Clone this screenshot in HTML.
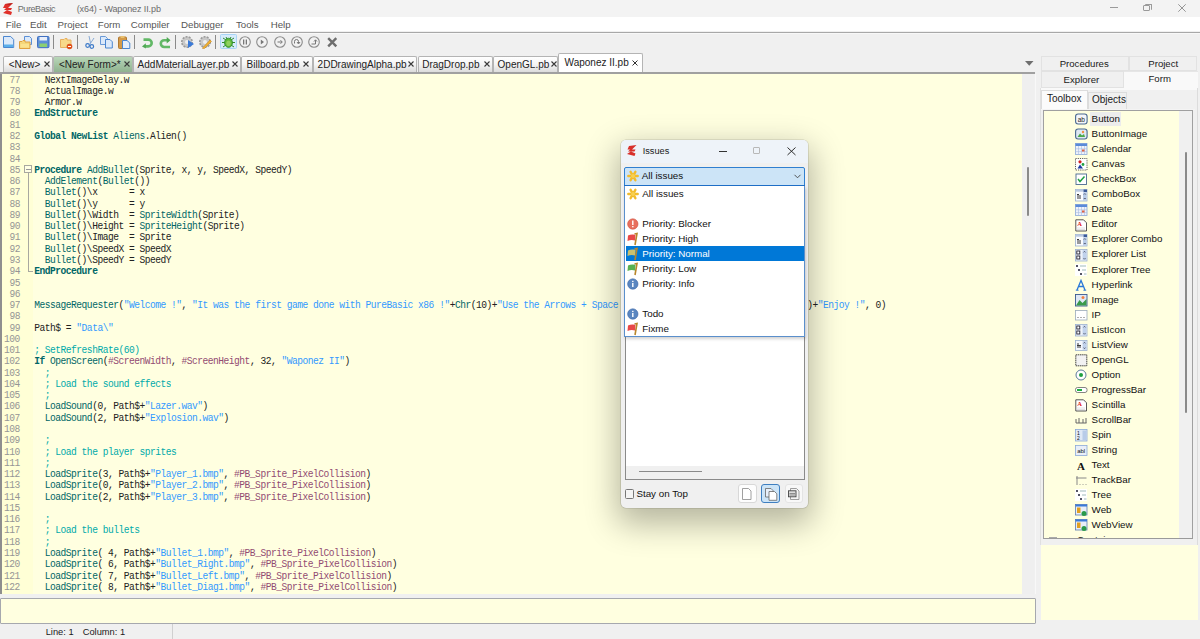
<!DOCTYPE html><html><head><meta charset="utf-8"><style>
*{margin:0;padding:0;box-sizing:border-box}
html,body{width:1200px;height:639px;overflow:hidden;background:#f0f0f0;position:relative;font-family:"Liberation Sans",sans-serif;}
.a{position:absolute;overflow:visible}
.t{position:absolute;white-space:pre;line-height:1}
.code{position:absolute;white-space:pre;font-family:"Liberation Mono",monospace;font-size:9.6px;letter-spacing:-0.50px;line-height:9.6px;left:34.3px;transform-origin:0 7.36px;transform:scaleY(1.07)}
.ln{position:absolute;white-space:pre;font-family:"Liberation Mono",monospace;font-size:9.6px;letter-spacing:-0.50px;line-height:9.6px;color:#959595;text-align:right;width:19.9px;left:0;transform-origin:0 7.36px;transform:scaleY(1.1)}
b{font-weight:bold}
</style></head><body>

<div class="a" style="left:0.00px;top:0.00px;width:1200.00px;height:16.80px;background:#f3f3f3;"></div>
<svg class="a" style="left:2.50px;top:2.50px" width="10" height="12" viewBox="0 0 10 12"><path d="M2 1 L10 0 L5 5 L9 5 L8 7 L4 7 L9 9 L8 12 L0 10 L4 7 L1 7 L3 5 L0 5 Z" fill="#e0302a"/><path d="M2 1 L10 0 L7 2 Z" fill="#b0201a"/></svg>
<div class="t" style="left:17.70px;top:4.58px;font-size:9px;color:#6c6c6c;font-weight:normal;letter-spacing:-0.4px">PureBasic</div>
<div class="t" style="left:76.70px;top:4.58px;font-size:9px;color:#6c6c6c;font-weight:normal;letter-spacing:-0.1px">(x64) - Waponez II.pb</div>
<div class="a" style="left:1110.00px;top:7.30px;width:7.50px;height:0.90px;background:#9a9a9a;"></div>
<div class="a" style="left:1143.3px;top:4.8px;width:7px;height:6.5px;border:0.8px solid #9a9a9a;border-radius:1px"></div>
<div class="a" style="left:1145px;top:4px;width:6.5px;height:6px;border-top:0.8px solid #9a9a9a;border-right:0.8px solid #9a9a9a;border-radius:1px"></div>
<svg class="a" style="left:1178.00px;top:3.50px" width="8" height="8" viewBox="0 0 8 8"><path d="M0.3 0.3 L7.7 7.7 M7.7 0.3 L0.3 7.7" stroke="#8a8a8a" stroke-width="0.9"/></svg>
<div class="a" style="left:0.00px;top:16.80px;width:1200.00px;height:14.70px;background:#ffffff;"></div>
<div class="a" style="left:0.00px;top:31.50px;width:1200.00px;height:1.50px;background:#a8a8a8;"></div>
<div class="a" style="left:0.00px;top:33.00px;width:1200.00px;height:1.00px;background:#f8f8f8;"></div>
<div class="t" style="left:5.80px;top:19.99px;font-size:9.7px;color:#555;font-weight:normal;">File</div>
<div class="t" style="left:30.00px;top:19.99px;font-size:9.7px;color:#555;font-weight:normal;">Edit</div>
<div class="t" style="left:57.50px;top:19.99px;font-size:9.7px;color:#555;font-weight:normal;">Project</div>
<div class="t" style="left:97.80px;top:19.99px;font-size:9.7px;color:#555;font-weight:normal;">Form</div>
<div class="t" style="left:130.80px;top:19.99px;font-size:9.7px;color:#555;font-weight:normal;">Compiler</div>
<div class="t" style="left:181.00px;top:19.99px;font-size:9.7px;color:#555;font-weight:normal;">Debugger</div>
<div class="t" style="left:236.00px;top:19.99px;font-size:9.7px;color:#555;font-weight:normal;">Tools</div>
<div class="t" style="left:270.70px;top:19.99px;font-size:9.7px;color:#555;font-weight:normal;">Help</div>
<svg class="a" style="left:2.80px;top:35.90px" width="12" height="12.5" viewBox="0 0 12 12.5"><path d="M0.5 0.5 H7.699999999999999 L10.7 3.5 V11.5 H0.5 Z" fill="#dbe9fa" stroke="#4a86d0" stroke-width="1"/><rect x="1" y="8.5" width="9.2" height="2.5" fill="#5aaeea"/></svg>
<svg class="a" style="left:18.50px;top:35.50px" width="14" height="13" viewBox="0 0 14 13"><path d="M5.5 0.5 H10.5 L12.5 2.5 V8.5 H5.5 Z" fill="#dbe9fa" stroke="#5a8fd6"/><path d="M0.5 5.5 H3 L4 4.5 H6 V6 H11 V12.5 H0.5 Z" fill="#f5d77a" stroke="#e0a040"/><rect x="1.5" y="8" width="8.5" height="3.5" fill="#fbe28e"/></svg>
<svg class="a" style="left:36.70px;top:36.00px" width="12.5" height="12.2" viewBox="0 0 12.5 12.2"><rect x="0.5" y="0.5" width="11.5" height="11.2" rx="1" fill="#5d8fd8" stroke="#3f6fc0"/><rect x="2.5" y="1" width="7.5" height="3.5" fill="#e8eefa"/><rect x="2.5" y="7.5" width="7.5" height="3.5" fill="#8ccf72"/></svg>
<div class="a" style="left:53.00px;top:34.80px;width:1.00px;height:14.10px;background:#8a8a8a;"></div>
<svg class="a" style="left:60.00px;top:37.50px" width="12.5" height="11.5" viewBox="0 0 12.5 11.5"><path d="M0.5 1.5 H4 L5 0.5 H7 V2 H11 V9.5 H0.5 Z" fill="#f7d98a" stroke="#e8b060"/><circle cx="9.5" cy="8.5" r="2.8" fill="#e0501a"/><rect x="8" y="8" width="3" height="1" fill="#fff"/></svg>
<div class="a" style="left:76.50px;top:34.80px;width:1.00px;height:14.10px;background:#8a8a8a;"></div>
<svg class="a" style="left:84.50px;top:35.50px" width="10" height="13" viewBox="0 0 10 13"><path d="M4 0 L5.5 7 M9 2 L5 8" stroke="#7aa0d0" stroke-width="0.9" fill="none"/><circle cx="2.6" cy="9.5" r="1.8" fill="none" stroke="#3a78c8" stroke-width="1.2"/><circle cx="6.8" cy="10.5" r="1.8" fill="none" stroke="#3a78c8" stroke-width="1.2"/></svg>
<svg class="a" style="left:100.00px;top:36.00px" width="13" height="12.5" viewBox="0 0 13 12.5"><path d="M0.5 0.5 H5.5 L7.5 2.5 V8.5 H0.5 Z" fill="#dbe9fa" stroke="#6a9ad8"/><path d="M5.5 3.5 H10 L12.3 5.8 V12 H5.5 Z" fill="#dbe9fa" stroke="#4a86d0"/></svg>
<svg class="a" style="left:117.50px;top:35.50px" width="12.5" height="13" viewBox="0 0 12.5 13"><rect x="0.5" y="1" width="8" height="11.5" rx="1" fill="#d49a48" stroke="#b07830"/><rect x="2.5" y="0" width="4" height="2" fill="#e8c070"/><path d="M4.5 4.5 H9 L11.8 7 V12.5 H4.5 Z" fill="#e4eefb" stroke="#4a86d0"/></svg>
<div class="a" style="left:134.00px;top:34.80px;width:1.00px;height:14.10px;background:#8a8a8a;"></div>
<svg class="a" style="left:141.50px;top:36.50px" width="11.5" height="11.5" viewBox="0 0 11.5 11.5"><path d="M1.5 2.6 H6.3 A3.4 3.4 0 0 1 6.3 9.4 H3" fill="none" stroke="#62b866" stroke-width="2.6"/><path d="M0 9.4 L3.8 6.2 L3.8 11.5 Z" fill="#4fa854"/></svg>
<svg class="a" style="left:158.50px;top:36.50px" width="11.5" height="11.5" viewBox="0 0 11.5 11.5"><path d="M10 3.2 H5.2 A3.4 3.4 0 0 0 5.2 10 H11" fill="none" stroke="#62b866" stroke-width="2.6"/><path d="M11.5 3.2 L7.7 0 L7.7 6.4 Z" fill="#4fa854"/></svg>
<div class="a" style="left:174.60px;top:34.80px;width:1.00px;height:14.10px;background:#8a8a8a;"></div>
<svg class="a" style="left:181.20px;top:36.00px" width="13.5" height="12.5" viewBox="0 0 13.5 12.5"><circle cx="6" cy="6" r="5.2" fill="#c8c8c8" stroke="#9a9a9a" stroke-dasharray="2 1.2" stroke-width="1.6"/><circle cx="6" cy="6" r="2" fill="#eee"/><path d="M7 4 L13 8 L7 12 Z" fill="#3a7ad8"/></svg>
<svg class="a" style="left:199.00px;top:36.00px" width="12.5" height="12.5" viewBox="0 0 12.5 12.5"><circle cx="6" cy="6" r="5.2" fill="#c8c8c8" stroke="#9a9a9a" stroke-dasharray="2 1.2" stroke-width="1.6"/><circle cx="6" cy="6" r="2" fill="#eee"/><path d="M4 11.5 L11 4 L12.5 5.5 L5.5 12.5 L3.5 12.5 Z" fill="#f0b030" stroke="#c08020" stroke-width="0.5"/></svg>
<div class="a" style="left:215.00px;top:34.80px;width:1.00px;height:14.10px;background:#8a8a8a;"></div>
<div class="a" style="left:220.4px;top:34px;width:16.3px;height:15.4px;background:#d6ebfb;border:0.8px solid #a8d4f6;border-radius:1.5px"></div>
<svg class="a" style="left:222.00px;top:35.50px" width="13" height="12.5" viewBox="0 0 13 12.5"><g stroke="#2f8a2f" stroke-width="1"><path d="M1 2 L4 4 M12 2 L9 4 M0 6.5 H3 M13 6.5 H10 M1 11 L4 9 M12 11 L9 9 M4 1 L5 3 M9 1 L8 3"/></g><ellipse cx="6.5" cy="6.8" rx="4" ry="4.6" fill="#5cb83a" stroke="#2f8a2f" stroke-width="0.8"/><ellipse cx="6.5" cy="7.2" rx="2.2" ry="2.8" fill="#8fd060"/></svg>
<svg class="a" style="left:239.30px;top:36.20px" width="12" height="12" viewBox="0 0 12 12"><circle cx="6" cy="6" r="5.3" fill="#f2f2f2" stroke="#8c8c8c" stroke-width="1.1"/><rect x="4" y="3.5" width="1.3" height="5" fill="#777"/><rect x="6.7" y="3.5" width="1.3" height="5" fill="#777"/></svg>
<svg class="a" style="left:256.30px;top:36.20px" width="12" height="12" viewBox="0 0 12 12"><circle cx="6" cy="6" r="5.3" fill="#f2f2f2" stroke="#8c8c8c" stroke-width="1.1"/><path d="M4.8 3.5 L8 6 L4.8 8.5 Z" fill="#777"/></svg>
<svg class="a" style="left:273.60px;top:36.20px" width="12" height="12" viewBox="0 0 12 12"><circle cx="6" cy="6" r="5.3" fill="#f2f2f2" stroke="#8c8c8c" stroke-width="1.1"/><path d="M3.5 6 H8 M6.5 4.2 L8.3 6 L6.5 7.8" stroke="#777" stroke-width="1" fill="none"/></svg>
<svg class="a" style="left:291.00px;top:36.20px" width="12" height="12" viewBox="0 0 12 12"><circle cx="6" cy="6" r="5.3" fill="#f2f2f2" stroke="#8c8c8c" stroke-width="1.1"/><path d="M3.5 7.5 V5.5 A2 2 0 0 1 7.5 5.5 V7 M6 6 L7.5 8 L9 6" stroke="#777" stroke-width="1" fill="none"/></svg>
<svg class="a" style="left:308.00px;top:36.20px" width="12" height="12" viewBox="0 0 12 12"><circle cx="6" cy="6" r="5.3" fill="#f2f2f2" stroke="#8c8c8c" stroke-width="1.1"/><path d="M3.5 8 H7.5 V4 M6 5.5 L7.5 3.8 L9 5.5" stroke="#777" stroke-width="1" fill="none"/></svg>
<svg class="a" style="left:326.50px;top:36.80px" width="10.5" height="10.5" viewBox="0 0 10.5 10.5"><path d="M1.2 1.2 L9.3 9.3 M9.3 1.2 L1.2 9.3" stroke="#6e6e6e" stroke-width="2.4"/></svg>
<div class="a" style="left:3.00px;top:56.2px;width:49.90px;height:16.3px;background:linear-gradient(#ffffff 0%,#f4f4f4 50%,#dcdcdc 100%);border:0.8px solid #b4b4b4;border-bottom:none;border-radius:2px 2px 0 0"></div>
<div class="t" style="left:8.70px;top:59.73px;font-size:10px;color:#222;font-weight:normal;">&lt;New&gt;</div>
<div class="a" style="left:52.90px;top:56.2px;width:80.10px;height:16.3px;background:linear-gradient(#b9d7b9,#8fb28f);border:0.8px solid #b4b4b4;border-bottom:none;border-radius:2px 2px 0 0"></div>
<div class="t" style="left:59.00px;top:59.73px;font-size:10px;color:#222;font-weight:normal;">&lt;New Form&gt;*</div>
<div class="a" style="left:133.00px;top:56.2px;width:108.30px;height:16.3px;background:linear-gradient(#ffffff 0%,#f4f4f4 50%,#dcdcdc 100%);border:0.8px solid #b4b4b4;border-bottom:none;border-radius:2px 2px 0 0"></div>
<div class="t" style="left:137.60px;top:59.73px;font-size:10px;color:#222;font-weight:normal;">AddMaterialLayer.pb</div>
<div class="a" style="left:241.30px;top:56.2px;width:72.00px;height:16.3px;background:linear-gradient(#ffffff 0%,#f4f4f4 50%,#dcdcdc 100%);border:0.8px solid #b4b4b4;border-bottom:none;border-radius:2px 2px 0 0"></div>
<div class="t" style="left:246.60px;top:59.73px;font-size:10px;color:#222;font-weight:normal;">Billboard.pb</div>
<div class="a" style="left:313.30px;top:56.2px;width:104.20px;height:16.3px;background:linear-gradient(#ffffff 0%,#f4f4f4 50%,#dcdcdc 100%);border:0.8px solid #b4b4b4;border-bottom:none;border-radius:2px 2px 0 0"></div>
<div class="t" style="left:317.60px;top:59.73px;font-size:10px;color:#222;font-weight:normal;">2DDrawingAlpha.pb</div>
<div class="a" style="left:417.50px;top:56.2px;width:75.80px;height:16.3px;background:linear-gradient(#ffffff 0%,#f4f4f4 50%,#dcdcdc 100%);border:0.8px solid #b4b4b4;border-bottom:none;border-radius:2px 2px 0 0"></div>
<div class="t" style="left:422.20px;top:59.73px;font-size:10px;color:#222;font-weight:normal;">DragDrop.pb</div>
<div class="a" style="left:493.30px;top:56.2px;width:65.00px;height:16.3px;background:linear-gradient(#ffffff 0%,#f4f4f4 50%,#dcdcdc 100%);border:0.8px solid #b4b4b4;border-bottom:none;border-radius:2px 2px 0 0"></div>
<div class="t" style="left:497.60px;top:59.73px;font-size:10px;color:#222;font-weight:normal;">OpenGL.pb</div>
<svg class="a" style="left:43.60px;top:60.90px" width="6" height="6" viewBox="0 0 6 6"><path d="M0.5 0.5 L5.5 5.5 M5.5 0.5 L0.5 5.5" stroke="#3a3a3a" stroke-width="1.1"/></svg>
<svg class="a" style="left:123.60px;top:60.90px" width="6" height="6" viewBox="0 0 6 6"><path d="M0.5 0.5 L5.5 5.5 M5.5 0.5 L0.5 5.5" stroke="#3a3a3a" stroke-width="1.1"/></svg>
<svg class="a" style="left:232.30px;top:60.90px" width="6" height="6" viewBox="0 0 6 6"><path d="M0.5 0.5 L5.5 5.5 M5.5 0.5 L0.5 5.5" stroke="#3a3a3a" stroke-width="1.1"/></svg>
<svg class="a" style="left:303.10px;top:60.90px" width="6" height="6" viewBox="0 0 6 6"><path d="M0.5 0.5 L5.5 5.5 M5.5 0.5 L0.5 5.5" stroke="#3a3a3a" stroke-width="1.1"/></svg>
<svg class="a" style="left:408.10px;top:60.90px" width="6" height="6" viewBox="0 0 6 6"><path d="M0.5 0.5 L5.5 5.5 M5.5 0.5 L0.5 5.5" stroke="#3a3a3a" stroke-width="1.1"/></svg>
<svg class="a" style="left:484.00px;top:60.90px" width="6" height="6" viewBox="0 0 6 6"><path d="M0.5 0.5 L5.5 5.5 M5.5 0.5 L0.5 5.5" stroke="#3a3a3a" stroke-width="1.1"/></svg>
<svg class="a" style="left:550.60px;top:60.90px" width="6" height="6" viewBox="0 0 6 6"><path d="M0.5 0.5 L5.5 5.5 M5.5 0.5 L0.5 5.5" stroke="#3a3a3a" stroke-width="1.1"/></svg>
<div class="a" style="left:558.3px;top:53.3px;width:85px;height:19.4px;background:#fff;border:0.8px solid #b4b4b4;border-bottom:none;border-radius:2px 2px 0 0"></div>
<div class="t" style="left:564.60px;top:58.13px;font-size:10px;color:#222;font-weight:normal;">Waponez II.pb</div>
<svg class="a" style="left:632.30px;top:60.00px" width="6" height="6" viewBox="0 0 6 6"><path d="M0.5 0.5 L5.5 5.5 M5.5 0.5 L0.5 5.5" stroke="#333" stroke-width="1"/></svg>
<svg class="a" style="left:1024.70px;top:61.20px" width="8.5" height="5" viewBox="0 0 8.5 5"><path d="M0 0 H8.5 L4.25 4.8 Z" fill="#6e6e6e"/></svg>
<div class="a" style="left:0.00px;top:72.30px;width:1034.50px;height:1.30px;background:#a0a0a0;"></div>
<div class="a" style="left:0.00px;top:73.50px;width:1022.00px;height:520.50px;background:#ffffe0;"></div>
<div class="a" style="left:0.00px;top:73.50px;width:1.80px;height:520.50px;background:#8e8e8e;"></div>
<div class="a" style="left:1.80px;top:73.50px;width:31.20px;height:520.50px;background:#ffffd6;"></div>
<div class="a" style="left:1022.00px;top:73.50px;width:12.40px;height:520.50px;background:#efefef;"></div>
<div class="a" style="left:1027.00px;top:167.30px;width:2.20px;height:48.80px;background:#8a8a8a;border-radius:1px"></div>
<div class="ln" style="top:75.64px">77</div>
<div class="code" style="top:75.64px"><span style="color:#222222">  NextImageDelay.w</span></div>
<div class="ln" style="top:86.91px">78</div>
<div class="code" style="top:86.91px"><span style="color:#222222">  ActualImage.w</span></div>
<div class="ln" style="top:98.18px">79</div>
<div class="code" style="top:98.18px"><span style="color:#222222">  Armor.w</span></div>
<div class="ln" style="top:109.45px">80</div>
<div class="code" style="top:109.45px"><b style="color:#006666">EndStructure</b></div>
<div class="ln" style="top:120.72px">81</div>
<div class="ln" style="top:131.99px">82</div>
<div class="code" style="top:131.99px"><b style="color:#006666">Global</b><span style="color:#222222"> </span><b style="color:#006666">NewList</b><span style="color:#222222"> </span><span style="color:#006666">Aliens</span><span style="color:#222222">.Alien()</span></div>
<div class="ln" style="top:143.26px">83</div>
<div class="ln" style="top:154.53px">84</div>
<div class="ln" style="top:165.80px">85</div>
<div class="code" style="top:165.80px"><b style="color:#006666">Procedure</b><span style="color:#222222"> </span><span style="color:#006666">AddBullet</span><span style="color:#222222">(Sprite, x, y, SpeedX, SpeedY)</span></div>
<div class="ln" style="top:177.07px">86</div>
<div class="code" style="top:177.07px"><span style="color:#222222">  </span><span style="color:#006666">AddElement</span><span style="color:#222222">(</span><span style="color:#006666">Bullet</span><span style="color:#222222">())</span></div>
<div class="ln" style="top:188.34px">87</div>
<div class="code" style="top:188.34px"><span style="color:#222222">  </span><span style="color:#006666">Bullet</span><span style="color:#222222">()\x      = x</span></div>
<div class="ln" style="top:199.61px">88</div>
<div class="code" style="top:199.61px"><span style="color:#222222">  </span><span style="color:#006666">Bullet</span><span style="color:#222222">()\y      = y</span></div>
<div class="ln" style="top:210.88px">89</div>
<div class="code" style="top:210.88px"><span style="color:#222222">  </span><span style="color:#006666">Bullet</span><span style="color:#222222">()\Width  = </span><span style="color:#006666">SpriteWidth</span><span style="color:#222222">(Sprite)</span></div>
<div class="ln" style="top:222.15px">90</div>
<div class="code" style="top:222.15px"><span style="color:#222222">  </span><span style="color:#006666">Bullet</span><span style="color:#222222">()\Height = </span><span style="color:#006666">SpriteHeight</span><span style="color:#222222">(Sprite)</span></div>
<div class="ln" style="top:233.42px">91</div>
<div class="code" style="top:233.42px"><span style="color:#222222">  </span><span style="color:#006666">Bullet</span><span style="color:#222222">()\Image  = Sprite</span></div>
<div class="ln" style="top:244.69px">92</div>
<div class="code" style="top:244.69px"><span style="color:#222222">  </span><span style="color:#006666">Bullet</span><span style="color:#222222">()\SpeedX = SpeedX</span></div>
<div class="ln" style="top:255.96px">93</div>
<div class="code" style="top:255.96px"><span style="color:#222222">  </span><span style="color:#006666">Bullet</span><span style="color:#222222">()\SpeedY = SpeedY</span></div>
<div class="ln" style="top:267.23px">94</div>
<div class="code" style="top:267.23px"><b style="color:#006666">EndProcedure</b></div>
<div class="ln" style="top:278.50px">95</div>
<div class="ln" style="top:289.77px">96</div>
<div class="ln" style="top:301.04px">97</div>
<div class="code" style="top:301.04px"><span style="color:#006666">MessageRequester</span><span style="color:#222222">(</span><span style="color:#3399FF">&quot;Welcome !&quot;</span><span style="color:#222222">, </span><span style="color:#3399FF">&quot;It was the first game done with PureBasic x86 !&quot;</span><span style="color:#222222">+</span><span style="color:#006666">Chr</span><span style="color:#222222">(10)+</span><span style="color:#3399FF">&quot;Use the Arrows + Space to move and shoot !&quot;+Chr(10)+Chr(10</span><span style="color:#222222">)+</span><span style="color:#3399FF">&quot;Enjoy !&quot;</span><span style="color:#222222">, 0)</span></div>
<div class="ln" style="top:312.31px">98</div>
<div class="ln" style="top:323.58px">99</div>
<div class="code" style="top:323.58px"><span style="color:#222222">Path$ = </span><span style="color:#3399FF">&quot;Data\&quot;</span></div>
<div class="ln" style="top:334.85px">100</div>
<div class="ln" style="top:346.12px">101</div>
<div class="code" style="top:346.12px"><span style="color:#00AAAA">; SetRefreshRate(60)</span></div>
<div class="ln" style="top:357.39px">102</div>
<div class="code" style="top:357.39px"><b style="color:#006666">If</b><span style="color:#222222"> </span><span style="color:#006666">OpenScreen</span><span style="color:#222222">(</span><span style="color:#924B72">#ScreenWidth</span><span style="color:#222222">, </span><span style="color:#924B72">#ScreenHeight</span><span style="color:#222222">, 32, </span><span style="color:#3399FF">&quot;Waponez II&quot;</span><span style="color:#222222">)</span></div>
<div class="ln" style="top:368.66px">103</div>
<div class="code" style="top:368.66px"><span style="color:#00AAAA">  ;</span></div>
<div class="ln" style="top:379.93px">104</div>
<div class="code" style="top:379.93px"><span style="color:#00AAAA">  ; Load the sound effects</span></div>
<div class="ln" style="top:391.20px">105</div>
<div class="code" style="top:391.20px"><span style="color:#00AAAA">  ;</span></div>
<div class="ln" style="top:402.47px">106</div>
<div class="code" style="top:402.47px"><span style="color:#222222">  </span><span style="color:#006666">LoadSound</span><span style="color:#222222">(0, Path$+</span><span style="color:#3399FF">&quot;Lazer.wav&quot;</span><span style="color:#222222">)</span></div>
<div class="ln" style="top:413.74px">107</div>
<div class="code" style="top:413.74px"><span style="color:#222222">  </span><span style="color:#006666">LoadSound</span><span style="color:#222222">(2, Path$+</span><span style="color:#3399FF">&quot;Explosion.wav&quot;</span><span style="color:#222222">)</span></div>
<div class="ln" style="top:425.01px">108</div>
<div class="ln" style="top:436.28px">109</div>
<div class="code" style="top:436.28px"><span style="color:#00AAAA">  ;</span></div>
<div class="ln" style="top:447.55px">110</div>
<div class="code" style="top:447.55px"><span style="color:#00AAAA">  ; Load the player sprites</span></div>
<div class="ln" style="top:458.82px">111</div>
<div class="code" style="top:458.82px"><span style="color:#00AAAA">  ;</span></div>
<div class="ln" style="top:470.09px">112</div>
<div class="code" style="top:470.09px"><span style="color:#222222">  </span><span style="color:#006666">LoadSprite</span><span style="color:#222222">(3, Path$+</span><span style="color:#3399FF">&quot;Player_1.bmp&quot;</span><span style="color:#222222">, </span><span style="color:#924B72">#PB_Sprite_PixelCollision</span><span style="color:#222222">)</span></div>
<div class="ln" style="top:481.36px">113</div>
<div class="code" style="top:481.36px"><span style="color:#222222">  </span><span style="color:#006666">LoadSprite</span><span style="color:#222222">(0, Path$+</span><span style="color:#3399FF">&quot;Player_2.bmp&quot;</span><span style="color:#222222">, </span><span style="color:#924B72">#PB_Sprite_PixelCollision</span><span style="color:#222222">)</span></div>
<div class="ln" style="top:492.63px">114</div>
<div class="code" style="top:492.63px"><span style="color:#222222">  </span><span style="color:#006666">LoadSprite</span><span style="color:#222222">(2, Path$+</span><span style="color:#3399FF">&quot;Player_3.bmp&quot;</span><span style="color:#222222">, </span><span style="color:#924B72">#PB_Sprite_PixelCollision</span><span style="color:#222222">)</span></div>
<div class="ln" style="top:503.90px">115</div>
<div class="ln" style="top:515.17px">116</div>
<div class="code" style="top:515.17px"><span style="color:#00AAAA">  ;</span></div>
<div class="ln" style="top:526.44px">117</div>
<div class="code" style="top:526.44px"><span style="color:#00AAAA">  ; Load the bullets</span></div>
<div class="ln" style="top:537.71px">118</div>
<div class="code" style="top:537.71px"><span style="color:#00AAAA">  ;</span></div>
<div class="ln" style="top:548.98px">119</div>
<div class="code" style="top:548.98px"><span style="color:#222222">  </span><span style="color:#006666">LoadSprite</span><span style="color:#222222">( 4, Path$+</span><span style="color:#3399FF">&quot;Bullet_1.bmp&quot;</span><span style="color:#222222">, </span><span style="color:#924B72">#PB_Sprite_PixelCollision</span><span style="color:#222222">)</span></div>
<div class="ln" style="top:560.25px">120</div>
<div class="code" style="top:560.25px"><span style="color:#222222">  </span><span style="color:#006666">LoadSprite</span><span style="color:#222222">( 6, Path$+</span><span style="color:#3399FF">&quot;Bullet_Right.bmp&quot;</span><span style="color:#222222">, </span><span style="color:#924B72">#PB_Sprite_PixelCollision</span><span style="color:#222222">)</span></div>
<div class="ln" style="top:571.52px">121</div>
<div class="code" style="top:571.52px"><span style="color:#222222">  </span><span style="color:#006666">LoadSprite</span><span style="color:#222222">( 7, Path$+</span><span style="color:#3399FF">&quot;Bullet_Left.bmp&quot;</span><span style="color:#222222">, </span><span style="color:#924B72">#PB_Sprite_PixelCollision</span><span style="color:#222222">)</span></div>
<div class="ln" style="top:582.79px">122</div>
<div class="code" style="top:582.79px"><span style="color:#222222">  </span><span style="color:#006666">LoadSprite</span><span style="color:#222222">( 8, Path$+</span><span style="color:#3399FF">&quot;Bullet_Diag1.bmp&quot;</span><span style="color:#222222">, </span><span style="color:#924B72">#PB_Sprite_PixelCollision</span><span style="color:#222222">)</span></div>
<div class="a" style="left:24.4px;top:165.2px;width:7.5px;height:8.2px;border:1px solid #a8a8a0;background:#ffffe4"></div>
<div class="a" style="left:25.80px;top:169.00px;width:4.80px;height:0.90px;background:#999;"></div>
<div class="a" style="left:27.80px;top:173.40px;width:1.00px;height:98.10px;background:#a8a8a0;"></div>
<div class="a" style="left:27.80px;top:270.80px;width:5.70px;height:0.90px;background:#a8a8a0;"></div>
<div class="a" style="left:0;top:597.5px;width:1036px;height:26px;background:#ffffe0;border:1.3px solid #a6a8ae;border-radius:1px"></div>
<div class="t" style="left:45.70px;top:627.73px;font-size:9.3px;color:#1a1a1a;font-weight:normal;">Line: 1</div>
<div class="t" style="left:82.70px;top:627.73px;font-size:9.3px;color:#1a1a1a;font-weight:normal;">Column: 1</div>
<div class="a" style="left:172.30px;top:624.00px;width:0.80px;height:15.00px;background:#d0d0d0;"></div>
<div class="a" style="left:1040.6px;top:55.7px;width:88.4px;height:15.5px;background:#f0f0f0;border:0.8px solid #e2e2e2"></div>
<div class="a" style="left:1129px;top:55.7px;width:68px;height:15.5px;background:#f0f0f0;border:0.8px solid #e2e2e2"></div>
<div class="t" style="left:1059.70px;top:59.07px;font-size:9.6px;color:#1a1a1a;font-weight:normal;">Procedures</div>
<div class="t" style="left:1148.30px;top:59.07px;font-size:9.6px;color:#1a1a1a;font-weight:normal;">Project</div>
<div class="a" style="left:1040.6px;top:71.2px;width:83px;height:17px;background:#f0f0f0;border:0.8px solid #e2e2e2"></div>
<div class="a" style="left:1123.5px;top:71px;width:74px;height:17.5px;background:#f9f9f9;border-top:0.8px solid #e6e6e6"></div>
<div class="t" style="left:1063.60px;top:75.37px;font-size:9.6px;color:#1a1a1a;font-weight:normal;">Explorer</div>
<div class="t" style="left:1148.50px;top:73.87px;font-size:9.6px;color:#1a1a1a;font-weight:normal;">Form</div>
<div class="a" style="left:1040.00px;top:88.00px;width:157.50px;height:456.50px;background:#f0f0f0;"></div>
<div class="a" style="left:1040.00px;top:88.00px;width:157.50px;height:2.40px;background:#f9f9f9;"></div>
<div class="a" style="left:1196.80px;top:88.00px;width:0.80px;height:456.50px;background:#dcdcdc;"></div>
<div class="a" style="left:1040.00px;top:88.00px;width:1.00px;height:456.50px;background:#e0e0e0;"></div>
<div class="a" style="left:1041.3px;top:90.4px;width:46.7px;height:18.6px;background:#fbfbfb;border:0.8px solid #dcdcdc;border-bottom:none"></div>
<div class="a" style="left:1088px;top:91.8px;width:39.4px;height:17.2px;background:#f0f0f0;border:0.8px solid #dcdcdc;border-bottom:none"></div>
<div class="t" style="left:1047.00px;top:94.03px;font-size:10px;color:#1a1a1a;font-weight:normal;">Toolbox</div>
<div class="t" style="left:1092.00px;top:95.44px;font-size:10px;color:#1a1a1a;font-weight:normal;">Objects</div>
<div class="a" style="left:1041.30px;top:108.80px;width:153.70px;height:1.40px;background:#f4f4f4;"></div>
<div class="a" style="left:1043px;top:110.2px;width:150px;height:428.5px;background:#ffffe0;border:1px solid #a0a0a0;border-bottom:1.2px solid #9a9a9a"></div>
<div class="a" style="left:1179.40px;top:111.20px;width:12.60px;height:426.40px;background:#f0f0f0;"></div>
<div class="a" style="left:1184.90px;top:152.00px;width:2.00px;height:260.90px;background:#8a8a8a;border-radius:1px"></div>
<div class="a" style="left:1040.80px;top:544.70px;width:157.70px;height:75.30px;background:#ffffe0;"></div>
<div class="a" style="left:1034.50px;top:73.50px;width:1.00px;height:520.50px;background:#f8f8f8;"></div>
<div class="a" style="left:1089.50px;top:111.60px;width:31.10px;height:14.90px;background:#ececec;"></div>
<svg class="a" style="left:1075.10px;top:113.40px" width="12.5" height="12.5" viewBox="0 0 12.5 12.5"><rect x="0.6" y="1" width="11.5" height="10" rx="2.5" fill="#f4f6fa" stroke="#4a6a90" stroke-width="1.1"/><text x="6.3" y="8.6" font-size="6.5" font-family="Liberation Sans" text-anchor="middle" fill="#222">ab</text></svg>
<div class="t" style="left:1091.60px;top:114.30px;font-size:9.8px;color:#111;font-weight:normal;">Button</div>
<svg class="a" style="left:1075.10px;top:128.42px" width="12.5" height="12.5" viewBox="0 0 12.5 12.5"><rect x="0.6" y="1" width="11.5" height="10" rx="2.5" fill="#dfe8f3" stroke="#4a6a90" stroke-width="1.1"/><path d="M2.5 9 L5 5.5 L7 7.5 L9 6 L10 9 Z" fill="#4aa84a"/><circle cx="8" cy="4" r="1.2" fill="#f09040"/></svg>
<div class="t" style="left:1091.60px;top:129.32px;font-size:9.8px;color:#111;font-weight:normal;">ButtonImage</div>
<svg class="a" style="left:1075.10px;top:143.44px" width="12.5" height="12.5" viewBox="0 0 12.5 12.5"><rect x="0.5" y="0.5" width="11.5" height="11" fill="#eef2fa" stroke="#8aa8d8" stroke-width="0.8"/><rect x="0.5" y="0.5" width="11.5" height="2.5" fill="#5a8ad8"/><path d="M3.5 3 V11.5 M6.5 3 V11.5 M9.5 3 V11.5 M0.5 5.8 H12 M0.5 8.6 H12" stroke="#a8bce0" stroke-width="0.6"/><rect x="7" y="6.5" width="2.5" height="2" fill="#e06040"/></svg>
<div class="t" style="left:1091.60px;top:144.34px;font-size:9.8px;color:#111;font-weight:normal;">Calendar</div>
<svg class="a" style="left:1075.10px;top:158.46px" width="12.5" height="12.5" viewBox="0 0 12.5 12.5"><rect x="0.5" y="0.5" width="11.5" height="11.5" fill="#fff" stroke="#333" stroke-width="0.8" stroke-dasharray="1.2 1"/><circle cx="5" cy="3.8" r="1.6" fill="#d02020"/><path d="M2.5 10.5 L5 6.5 L8 10.5 Z" fill="#1a3aa0"/><circle cx="8" cy="6.5" r="1.4" fill="#20a040"/></svg>
<div class="t" style="left:1091.60px;top:159.36px;font-size:9.8px;color:#111;font-weight:normal;">Canvas</div>
<svg class="a" style="left:1075.10px;top:173.48px" width="12.5" height="12.5" viewBox="0 0 12.5 12.5"><rect x="1" y="1" width="10.5" height="10.5" fill="#fff" stroke="#4a6a90" stroke-width="0.9"/><path d="M3 6 L5 8.5 L9.5 3.5" stroke="#20a040" stroke-width="1.5" fill="none"/></svg>
<div class="t" style="left:1091.60px;top:174.38px;font-size:9.8px;color:#111;font-weight:normal;">CheckBox</div>
<svg class="a" style="left:1075.10px;top:188.50px" width="12.5" height="12.5" viewBox="0 0 12.5 12.5"><rect x="0.5" y="0.5" width="11.5" height="11.5" fill="#fafcff" stroke="#9ab0d0" stroke-width="0.8"/><rect x="0.5" y="0.5" width="11.5" height="2.2" fill="#b8c8e0"/><rect x="8.6" y="0.5" width="3.4" height="2.6" fill="#3a5a98"/><path d="M2 5.5 H4 M2 7 H6 M2 9 H6" stroke="#222" stroke-width="0.9"/><rect x="8" y="3.4" width="3.6" height="8.2" fill="#b8cce8"/><path d="M8.8 5.6 L9.8 4.6 L10.8 5.6 M8.8 9 L9.8 10 L10.8 9" stroke="#334" stroke-width="0.7" fill="none"/></svg>
<div class="t" style="left:1091.60px;top:189.40px;font-size:9.8px;color:#111;font-weight:normal;">ComboBox</div>
<svg class="a" style="left:1075.10px;top:203.52px" width="12.5" height="12.5" viewBox="0 0 12.5 12.5"><rect x="0.5" y="0.5" width="11.5" height="11" fill="#eef2fa" stroke="#8aa8d8" stroke-width="0.8"/><rect x="0.5" y="0.5" width="11.5" height="2.5" fill="#5a8ad8"/><path d="M3.5 3 V11.5 M6.5 3 V11.5 M9.5 3 V11.5 M0.5 5.8 H12 M0.5 8.6 H12" stroke="#a8bce0" stroke-width="0.6"/><rect x="7" y="6.5" width="2.5" height="2" fill="#e06040"/></svg>
<div class="t" style="left:1091.60px;top:204.42px;font-size:9.8px;color:#111;font-weight:normal;">Date</div>
<svg class="a" style="left:1075.10px;top:218.54px" width="12.5" height="12.5" viewBox="0 0 12.5 12.5"><path d="M0.8 0.8 H8.5 L11.5 3.8 V12 H0.8 Z" fill="#fff" stroke="#444" stroke-width="0.9"/><text x="4.5" y="7" font-size="6.5" font-weight="bold" font-family="Liberation Serif" text-anchor="middle" fill="#e02020">A</text><path d="M2 9 H10 M2 10.5 H10" stroke="#ccc" stroke-width="0.6"/></svg>
<div class="t" style="left:1091.60px;top:219.44px;font-size:9.8px;color:#111;font-weight:normal;">Editor</div>
<svg class="a" style="left:1075.10px;top:233.56px" width="12.5" height="12.5" viewBox="0 0 12.5 12.5"><rect x="0.5" y="0.5" width="11.5" height="11.5" fill="#fafcff" stroke="#9ab0d0" stroke-width="0.8"/><rect x="0.5" y="0.5" width="11.5" height="2.2" fill="#b8c8e0"/><rect x="8.6" y="0.5" width="3.4" height="2.6" fill="#3a5a98"/><path d="M2 5.5 H4 M2 7 H6 M2 9 H6" stroke="#222" stroke-width="0.9"/><rect x="8" y="3.4" width="3.6" height="8.2" fill="#b8cce8"/><path d="M8.8 5.6 L9.8 4.6 L10.8 5.6 M8.8 9 L9.8 10 L10.8 9" stroke="#334" stroke-width="0.7" fill="none"/></svg>
<div class="t" style="left:1091.60px;top:234.46px;font-size:9.8px;color:#111;font-weight:normal;">Explorer Combo</div>
<svg class="a" style="left:1075.10px;top:248.58px" width="12.5" height="12.5" viewBox="0 0 12.5 12.5"><rect x="0.5" y="0.5" width="11.5" height="11.5" fill="#eef3fb" stroke="#9ab0d0" stroke-width="0.8"/><rect x="1.8" y="2" width="3" height="3" fill="#fff" stroke="#223" stroke-width="0.9"/><rect x="1.8" y="7" width="3" height="3" fill="#fff" stroke="#223" stroke-width="0.9"/><rect x="7.6" y="1.2" width="3.8" height="10" fill="#c0d2ec"/><path d="M8.5 3.4 L9.5 2.4 L10.5 3.4 M8.5 9.2 L9.5 10.2 L10.5 9.2" stroke="#334" stroke-width="0.7" fill="none"/></svg>
<div class="t" style="left:1091.60px;top:249.48px;font-size:9.8px;color:#111;font-weight:normal;">Explorer List</div>
<svg class="a" style="left:1075.10px;top:263.60px" width="12.5" height="12.5" viewBox="0 0 12.5 12.5"><rect x="0" y="0" width="12" height="12" fill="#fff"/><rect x="1" y="1" width="2" height="2" fill="#556"/><rect x="3" y="5" width="2" height="2" fill="#556"/><rect x="5" y="9" width="2" height="2" fill="#556"/><path d="M5 2 H11 M7 6 H11 M9 10 H11.5" stroke="#8aa" stroke-width="0.8"/></svg>
<div class="t" style="left:1091.60px;top:264.50px;font-size:9.8px;color:#111;font-weight:normal;">Explorer Tree</div>
<svg class="a" style="left:1075.10px;top:278.62px" width="12.5" height="12.5" viewBox="0 0 12.5 12.5"><path d="M2 11 L6 1.5 L10 11 M3.6 7.5 H8.4" fill="none" stroke="#2a78d8" stroke-width="1.3"/><path d="M0.8 11.2 H3.6 M8.4 11.2 H11.2" stroke="#2a78d8" stroke-width="1"/></svg>
<div class="t" style="left:1091.60px;top:279.52px;font-size:9.8px;color:#111;font-weight:normal;">Hyperlink</div>
<svg class="a" style="left:1075.10px;top:293.64px" width="12.5" height="12.5" viewBox="0 0 12.5 12.5"><rect x="0.5" y="0.5" width="11.5" height="11.5" fill="#dfe8f5" stroke="#3a5a90" stroke-width="0.9"/><path d="M1 11.5 L4.5 6 L7.5 9 L11.5 5 V11.5 Z" fill="#3a9a4a"/><circle cx="8" cy="3.5" r="1.5" fill="#f08040"/></svg>
<div class="t" style="left:1091.60px;top:294.54px;font-size:9.8px;color:#111;font-weight:normal;">Image</div>
<svg class="a" style="left:1075.10px;top:308.66px" width="12.5" height="12.5" viewBox="0 0 12.5 12.5"><rect x="0.5" y="1.5" width="11.5" height="9.5" fill="#fff" stroke="#9ab" stroke-width="0.8"/><path d="M2.5 8.5 H3.5 M5.5 8.5 H6.5 M8.5 8.5 H9.5" stroke="#333" stroke-width="0.8"/></svg>
<div class="t" style="left:1091.60px;top:309.56px;font-size:9.8px;color:#111;font-weight:normal;">IP</div>
<svg class="a" style="left:1075.10px;top:323.68px" width="12.5" height="12.5" viewBox="0 0 12.5 12.5"><rect x="0.5" y="0.5" width="11.5" height="11.5" fill="#eef3fb" stroke="#9ab0d0" stroke-width="0.8"/><rect x="1.8" y="2" width="3" height="3" fill="#fff" stroke="#223" stroke-width="0.9"/><rect x="1.8" y="7" width="3" height="3" fill="#fff" stroke="#223" stroke-width="0.9"/><rect x="7.6" y="1.2" width="3.8" height="10" fill="#c0d2ec"/><path d="M8.5 3.4 L9.5 2.4 L10.5 3.4 M8.5 9.2 L9.5 10.2 L10.5 9.2" stroke="#334" stroke-width="0.7" fill="none"/></svg>
<div class="t" style="left:1091.60px;top:324.58px;font-size:9.8px;color:#111;font-weight:normal;">ListIcon</div>
<svg class="a" style="left:1075.10px;top:338.70px" width="12.5" height="12.5" viewBox="0 0 12.5 12.5"><rect x="0.5" y="1.5" width="11.5" height="10" fill="#f4f7fc" stroke="#9ab0d0" stroke-width="0.8"/><path d="M2 5 H4 M2 6.5 H6 M2 8 H6" stroke="#222" stroke-width="0.9"/><rect x="7.6" y="2.2" width="3.8" height="8.6" fill="#c0d2ec"/><path d="M8.5 4.4 L9.5 3.4 L10.5 4.4 M8.5 8.6 L9.5 9.6 L10.5 8.6" stroke="#334" stroke-width="0.7" fill="none"/></svg>
<div class="t" style="left:1091.60px;top:339.60px;font-size:9.8px;color:#111;font-weight:normal;">ListView</div>
<svg class="a" style="left:1075.10px;top:353.72px" width="12.5" height="12.5" viewBox="0 0 12.5 12.5"><rect x="0.8" y="0.8" width="11" height="11" fill="#f2f2f2" stroke="#333" stroke-width="0.9" stroke-dasharray="1.5 0.6"/></svg>
<div class="t" style="left:1091.60px;top:354.62px;font-size:9.8px;color:#111;font-weight:normal;">OpenGL</div>
<svg class="a" style="left:1075.10px;top:368.74px" width="12.5" height="12.5" viewBox="0 0 12.5 12.5"><circle cx="6" cy="6" r="5" fill="#fff" stroke="#4a6a90" stroke-width="0.9"/><circle cx="6" cy="6" r="2" fill="#20a040"/></svg>
<div class="t" style="left:1091.60px;top:369.64px;font-size:9.8px;color:#111;font-weight:normal;">Option</div>
<svg class="a" style="left:1075.10px;top:383.76px" width="12.5" height="12.5" viewBox="0 0 12.5 12.5"><rect x="0.5" y="3.5" width="11.5" height="5" rx="2" fill="#fff" stroke="#666" stroke-width="0.8"/><rect x="2" y="5" width="5" height="2" fill="#20b040"/></svg>
<div class="t" style="left:1091.60px;top:384.66px;font-size:9.8px;color:#111;font-weight:normal;">ProgressBar</div>
<svg class="a" style="left:1075.10px;top:398.78px" width="12.5" height="12.5" viewBox="0 0 12.5 12.5"><path d="M0.8 0.8 H8.5 L11.5 3.8 V12 H0.8 Z" fill="#fff" stroke="#444" stroke-width="0.9"/><text x="4.5" y="7" font-size="6.5" font-weight="bold" font-family="Liberation Serif" text-anchor="middle" fill="#e02020">A</text><path d="M2 9 H10 M2 10.5 H10" stroke="#ccc" stroke-width="0.6"/></svg>
<div class="t" style="left:1091.60px;top:399.68px;font-size:9.8px;color:#111;font-weight:normal;">Scintilla</div>
<svg class="a" style="left:1075.10px;top:413.80px" width="12.5" height="12.5" viewBox="0 0 12.5 12.5"><path d="M1 5 V9 M4 4 V9 M8 5 V9 M11 4 V9 M1 9 H11.5" stroke="#666" stroke-width="1"/></svg>
<div class="t" style="left:1091.60px;top:414.70px;font-size:9.8px;color:#111;font-weight:normal;">ScrollBar</div>
<svg class="a" style="left:1075.10px;top:428.82px" width="12.5" height="12.5" viewBox="0 0 12.5 12.5"><rect x="0.5" y="0.5" width="11.5" height="11.5" fill="#dfe8f5" stroke="#8aa8d8" stroke-width="0.8"/><text x="3.5" y="5.5" font-size="5" font-family="Liberation Sans" text-anchor="middle" fill="#111">1</text><text x="3.5" y="11" font-size="5" font-family="Liberation Sans" text-anchor="middle" fill="#111">2</text><rect x="7.5" y="1.5" width="3.5" height="9.5" fill="#b8cce8"/></svg>
<div class="t" style="left:1091.60px;top:429.72px;font-size:9.8px;color:#111;font-weight:normal;">Spin</div>
<svg class="a" style="left:1075.10px;top:443.84px" width="12.5" height="12.5" viewBox="0 0 12.5 12.5"><rect x="0.5" y="1.5" width="11.5" height="10" fill="#e8eef8" stroke="#8aa8d8" stroke-width="0.8"/><text x="6.2" y="8.8" font-size="6" font-family="Liberation Sans" text-anchor="middle" fill="#111">abl</text></svg>
<div class="t" style="left:1091.60px;top:444.74px;font-size:9.8px;color:#111;font-weight:normal;">String</div>
<svg class="a" style="left:1075.10px;top:458.86px" width="12.5" height="12.5" viewBox="0 0 12.5 12.5"><text x="6" y="10.5" font-size="11" font-weight="bold" font-family="Liberation Serif" text-anchor="middle" fill="#111">A</text></svg>
<div class="t" style="left:1091.60px;top:459.76px;font-size:9.8px;color:#111;font-weight:normal;">Text</div>
<svg class="a" style="left:1075.10px;top:473.88px" width="12.5" height="12.5" viewBox="0 0 12.5 12.5"><path d="M2 2 V11 M1 4 H11.5" stroke="#888" stroke-width="1"/><path d="M5 10 V11 M8 10 V11 M11 10 V11" stroke="#888" stroke-width="0.8"/></svg>
<div class="t" style="left:1091.60px;top:474.78px;font-size:9.8px;color:#111;font-weight:normal;">TrackBar</div>
<svg class="a" style="left:1075.10px;top:488.90px" width="12.5" height="12.5" viewBox="0 0 12.5 12.5"><rect x="0" y="0" width="12" height="12" fill="#fff"/><rect x="1" y="1" width="2" height="2" fill="#556"/><rect x="3" y="5" width="2" height="2" fill="#556"/><rect x="5" y="9" width="2" height="2" fill="#556"/><path d="M5 2 H11 M7 6 H11 M9 10 H11.5" stroke="#8aa" stroke-width="0.8"/></svg>
<div class="t" style="left:1091.60px;top:489.80px;font-size:9.8px;color:#111;font-weight:normal;">Tree</div>
<svg class="a" style="left:1075.10px;top:503.92px" width="12.5" height="12.5" viewBox="0 0 12.5 12.5"><rect x="0.5" y="0.5" width="11.5" height="10.5" fill="#e8eef8" stroke="#5a7ab0" stroke-width="0.8"/><rect x="0.5" y="0.5" width="11.5" height="2" fill="#3a7ad8"/><rect x="2" y="3.5" width="3.5" height="5.5" fill="#e0a020"/><circle cx="9" cy="9.5" r="2.5" fill="#2a9a4a"/></svg>
<div class="t" style="left:1091.60px;top:504.82px;font-size:9.8px;color:#111;font-weight:normal;">Web</div>
<svg class="a" style="left:1075.10px;top:518.94px" width="12.5" height="12.5" viewBox="0 0 12.5 12.5"><rect x="0.5" y="0.5" width="11.5" height="10.5" fill="#e8eef8" stroke="#5a7ab0" stroke-width="0.8"/><rect x="0.5" y="0.5" width="11.5" height="2" fill="#3a7ad8"/><rect x="2" y="3.5" width="3.5" height="5.5" fill="#e0a020"/><circle cx="9" cy="9.5" r="2.5" fill="#2a9a4a"/></svg>
<div class="t" style="left:1091.60px;top:519.84px;font-size:9.8px;color:#111;font-weight:normal;">WebView</div>
<div class="a" style="left:1044px;top:532px;width:136px;height:5.6px;overflow:hidden"><div class="t" style="left:33px;top:3px;font-size:9.8px;color:#1a1a1a">Containers</div><div class="a" style="left:5px;top:4.5px;width:8px;height:4px;background:#aaa"></div></div>
<div class="a" style="left:620.6px;top:140.2px;width:187.5px;height:368.3px;border-radius:5px;background:#f0f0f0;box-shadow:0 12px 32px 4px rgba(0,0,0,0.29),0 0 0 0.6px rgba(0,0,0,0.16);overflow:hidden"><div class="a" style="left:0;top:0;width:188px;height:22.5px;background:#eef3f9"></div></div>
<svg class="a" style="left:627.30px;top:145.10px" width="9.5" height="11" viewBox="0 0 9.5 11"><path d="M2 1 L9.5 0 L5 4.5 L8.5 4.5 L7.5 6.5 L4 6.5 L8.5 8.5 L7.5 11 L0 9 L3.8 6.5 L1 6.5 L3 4.5 L0.5 4.5 Z" fill="#d8302a"/></svg>
<div class="t" style="left:642.70px;top:147.01px;font-size:9.2px;color:#1a1a1a;font-weight:normal;">Issues</div>
<div class="a" style="left:719.00px;top:151.00px;width:8.00px;height:0.80px;background:#333;"></div>
<div class="a" style="left:752.7px;top:147.3px;width:7.5px;height:7.2px;border:0.8px solid #b8b8b8;border-radius:1px"></div>
<svg class="a" style="left:786.80px;top:147.20px" width="9" height="8.5" viewBox="0 0 9 8.5"><path d="M0.5 0.5 L8.5 8 M8.5 0.5 L0.5 8" stroke="#222" stroke-width="0.95"/></svg>
<div class="a" style="left:624.2px;top:166.6px;width:180.8px;height:19px;background:#cce4f7;border:1px solid #2f7fd0;border-radius:2px 2px 0 0"></div>
<div class="a" style="left:624.20px;top:184.60px;width:180.80px;height:1.20px;background:#1f6fc8;"></div>
<svg class="a" style="left:626.80px;top:169.80px" width="12" height="12" viewBox="0 0 12 12"><g stroke="#f2bc2c" stroke-width="2.4" stroke-linecap="round"><path d="M1.3 6 H10.7 M3.6 1.8 L8.4 10.2 M8.4 1.8 L3.6 10.2"/></g><circle cx="6" cy="6" r="2" fill="#f8d050"/></svg>
<div class="t" style="left:641.80px;top:171.30px;font-size:9.8px;color:#111;font-weight:normal;">All issues</div>
<svg class="a" style="left:793.50px;top:173.50px" width="7" height="5" viewBox="0 0 7 5"><path d="M0.5 0.8 L3.5 3.8 L6.5 0.8" stroke="#444" stroke-width="0.9" fill="none"/></svg>
<div class="a" style="left:624.8px;top:185.8px;width:180.1px;height:294px;background:#fff;border:0.9px solid #8a8a8a;border-top:none"></div>
<div class="a" style="left:625.60px;top:466.30px;width:178.40px;height:12.70px;background:#f0f0f0;"></div>
<div class="a" style="left:638.90px;top:471.10px;width:63.40px;height:1.20px;background:#8a8a8a;"></div>
<div class="a" style="left:624.2px;top:185.7px;width:180.6px;height:151px;background:#fff;border:1px solid #5a8fcc;border-top:none;box-shadow:1px 2px 3px rgba(0,0,0,0.18)"></div>
<div class="a" style="left:626.00px;top:245.90px;width:177.80px;height:15.10px;background:#0078d7;"></div>
<svg class="a" style="left:627.30px;top:188.20px" width="12" height="12" viewBox="0 0 12 12"><g stroke="#f2bc2c" stroke-width="2.4" stroke-linecap="round"><path d="M1.3 6 H10.7 M3.6 1.8 L8.4 10.2 M8.4 1.8 L3.6 10.2"/></g><circle cx="6" cy="6" r="2" fill="#f8d050"/></svg>
<div class="t" style="left:642.30px;top:189.40px;font-size:9.8px;color:#111;font-weight:normal;">All issues</div>
<svg class="a" style="left:627.30px;top:218.20px" width="12" height="12" viewBox="0 0 12 12"><circle cx="5.8" cy="6" r="5.2" fill="#e8705e" stroke="#d05040" stroke-width="0.6"/><rect x="5.1" y="2.5" width="1.4" height="4.5" fill="#fff"/><rect x="5.1" y="8" width="1.4" height="1.3" fill="#fff"/></svg>
<div class="t" style="left:642.30px;top:219.40px;font-size:9.8px;color:#111;font-weight:normal;">Priority: Blocker</div>
<svg class="a" style="left:627.30px;top:233.20px" width="12" height="12" viewBox="0 0 12 12"><path d="M7.5 1 L10 0.5 L8 12" stroke="#b8862a" stroke-width="1.6" fill="none"/><path d="M1 2.5 Q4 1 8.5 1.8 L8 7.5 Q4 6.5 0.5 8 Z" fill="#e84848"/></svg>
<div class="t" style="left:642.30px;top:234.40px;font-size:9.8px;color:#111;font-weight:normal;">Priority: High</div>
<svg class="a" style="left:627.30px;top:248.20px" width="12" height="12" viewBox="0 0 12 12"><path d="M7.5 1 L10 0.5 L8 12" stroke="#b8862a" stroke-width="1.6" fill="none"/><path d="M1 2.5 Q4 1 8.5 1.8 L8 7.5 Q4 6.5 0.5 8 Z" fill="#c8c070"/></svg>
<div class="t" style="left:642.30px;top:249.40px;font-size:9.8px;color:#fff;font-weight:normal;">Priority: Normal</div>
<svg class="a" style="left:627.30px;top:263.20px" width="12" height="12" viewBox="0 0 12 12"><path d="M7.5 1 L10 0.5 L8 12" stroke="#b8862a" stroke-width="1.6" fill="none"/><path d="M1 2.5 Q4 1 8.5 1.8 L8 7.5 Q4 6.5 0.5 8 Z" fill="#58b050"/></svg>
<div class="t" style="left:642.30px;top:264.40px;font-size:9.8px;color:#111;font-weight:normal;">Priority: Low</div>
<svg class="a" style="left:627.30px;top:278.20px" width="12" height="12" viewBox="0 0 12 12"><circle cx="5.8" cy="6" r="5.2" fill="#5a86c0" stroke="#3a66a8" stroke-width="0.6"/><rect x="5.1" y="5" width="1.4" height="4" fill="#fff"/><rect x="5.1" y="2.8" width="1.4" height="1.3" fill="#fff"/></svg>
<div class="t" style="left:642.30px;top:279.40px;font-size:9.8px;color:#111;font-weight:normal;">Priority: Info</div>
<svg class="a" style="left:627.30px;top:308.20px" width="12" height="12" viewBox="0 0 12 12"><circle cx="5.8" cy="6" r="5.2" fill="#5a86c0" stroke="#3a66a8" stroke-width="0.6"/><rect x="5.1" y="5" width="1.4" height="4" fill="#fff"/><rect x="5.1" y="2.8" width="1.4" height="1.3" fill="#fff"/></svg>
<div class="t" style="left:642.30px;top:309.40px;font-size:9.8px;color:#111;font-weight:normal;">Todo</div>
<svg class="a" style="left:627.30px;top:323.20px" width="12" height="12" viewBox="0 0 12 12"><path d="M7.5 1 L10 0.5 L8 12" stroke="#b8862a" stroke-width="1.6" fill="none"/><path d="M1 2.5 Q4 1 8.5 1.8 L8 7.5 Q4 6.5 0.5 8 Z" fill="#e84848"/></svg>
<div class="t" style="left:642.30px;top:324.40px;font-size:9.8px;color:#111;font-weight:normal;">Fixme</div>
<div class="a" style="left:624.8px;top:489.4px;width:9px;height:9.6px;background:#f4f4f4;border:0.9px solid #777;border-radius:1.5px"></div>
<div class="t" style="left:636.40px;top:489.10px;font-size:9.8px;color:#111;font-weight:normal;">Stay on Top</div>
<div class="a" style="left:738.4px;top:484.4px;width:18.3px;height:19px;background:#fdfdfd;border:0.8px solid #d8d8d8;border-radius:3px"></div>
<div class="a" style="left:761.2px;top:484.4px;width:18.9px;height:19px;background:#cce4f7;border:1.2px solid #3f7fc0;border-radius:3px"></div>
<div class="a" style="left:785px;top:484.4px;width:17.5px;height:19px;background:#f8f8f8;border:0.8px solid #e4e4e4;border-radius:3px"></div>
<svg class="a" style="left:742.30px;top:488.00px" width="10" height="12" viewBox="0 0 10 12"><path d="M0.5 0.5 H6.5 L9 3 V11.5 H0.5 Z" fill="#fff" stroke="#888" stroke-width="0.8"/></svg>
<svg class="a" style="left:764.50px;top:487.50px" width="13" height="13" viewBox="0 0 13 13"><path d="M0.5 0.5 H6 L8 2.5 V9 H0.5 Z" fill="#e8f0fa" stroke="#666" stroke-width="0.8"/><path d="M4 3.5 H9.5 L11.8 5.8 V12.3 H4 Z" fill="#fff" stroke="#666" stroke-width="0.8"/></svg>
<svg class="a" style="left:788.00px;top:487.50px" width="12" height="12" viewBox="0 0 12 12"><path d="M2.5 0.5 H8.5 L11 3 V11.5 H2.5 Z" fill="#f4f4f4" stroke="#888" stroke-width="0.8"/><rect x="0.5" y="2.8" width="7.5" height="6" fill="#ddd" stroke="#444" stroke-width="0.9"/><path d="M1.5 5.5 H7 M1.5 7 H7" stroke="#555" stroke-width="0.6"/></svg>
</body></html>
